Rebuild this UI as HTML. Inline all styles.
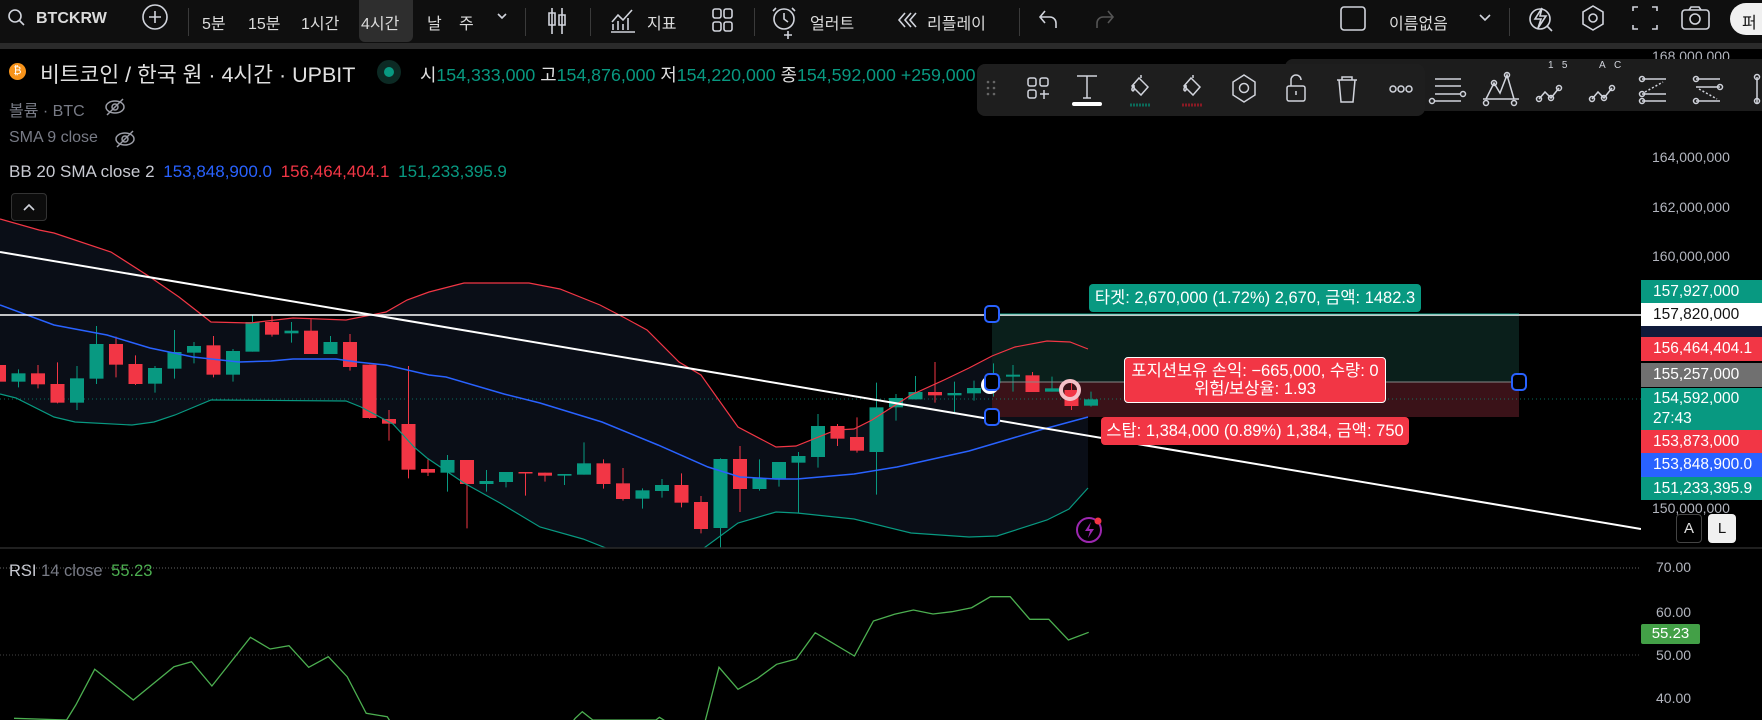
<!DOCTYPE html>
<html><head><meta charset="utf-8"><style>
*{margin:0;padding:0;box-sizing:border-box}
body{width:1762px;height:720px;background:#000;overflow:hidden;position:relative;font-family:"Liberation Sans","Noto Sans CJK KR",sans-serif;color:#d1d4dc}
.a{position:absolute;white-space:nowrap}
#top{position:absolute;left:0;top:0;width:1762px;height:43px;background:#0f0f0f}
#band{position:absolute;left:0;top:43px;width:1762px;height:6px;background:#2a2a2a}
.tb{font-size:16px;top:10px;color:#dbdbdb}
.div{position:absolute;top:8px;width:1px;height:28px;background:#3a3a3a}
.pl{position:absolute;left:1641px;width:121px;font-size:15.5px;color:#fff;padding-left:12px;line-height:23px}
.ax{position:absolute;left:1652px;font-size:14px;color:#b2b5be}
.g{color:#089981}
</style></head><body>
<svg id="ch" width="1762" height="720" style="position:absolute;left:0;top:0"></svg>

<div id="top"></div><div id="band"></div>
<svg class="a" style="left:0;top:0" width="1762" height="43" fill="none" stroke="#d1d4dc" stroke-width="1.6">
<circle cx="15" cy="16" r="6"/><path d="M19 20l5 5"/>
<circle cx="155" cy="17" r="12"/><path d="M155 11v12M149 17h12"/>
<path d="M498 14l4 4 4-4"/>
<path d="M552 8v26M552 13h-3v12h6V13z M562 8v26M559 15h6v10h-6z"/>
<path d="M611 32h24M613 30v-6M618 30v-9M623 30v-6M628 30v-12M612 22l6-7 5 5 9-10"/>
<rect x="713" y="9" width="8" height="9" rx="2"/><rect x="724" y="9" width="8" height="9" rx="2"/><rect x="713" y="22" width="8" height="9" rx="2"/><rect x="724" y="22" width="8" height="9" rx="2"/>
<circle cx="784" cy="19" r="10"/><path d="M784 13v6l4 3M776 8l-3 3M792 8l3 3M788 31v8M784 35h8"/>
<path d="M905 13l-6 7 6 7M911 13l-6 7 6 7M916 13l-6 7 6 7"/>
<path d="M1045 11l-5 6 5 6M1040 17h10a6 6 0 0 1 6 6v5"/>
<path d="M1108 11l5 6-5 6M1113 17h-10a6 6 0 0 0-6 6v5" stroke="#555"/>
<rect x="1341" y="7" width="24" height="23" rx="3"/>
<path d="M1480 15l5 5 5-5"/>
<path d="M1542 8l-7 11h6l-3 9 8-12h-6z"/><circle cx="1540" cy="19" r="10"/><path d="M1547 26l5 5"/>
<path d="M1593 6l10 6v12l-10 6-10-6V12z"/><circle cx="1593" cy="18" r="4"/>
<path d="M1633 11v-4h5M1652 7h5v4M1657 25v4h-5M1638 29h-5v-4"/>
<rect x="1682" y="10" width="27" height="19" rx="3"/><circle cx="1695" cy="19" r="5"/><path d="M1689 10l2-3h8l2 3"/>
</svg>
<div class="a" style="left:359px;top:0;width:54px;height:42px;background:#2e2e2e;border-radius:0 0 6px 6px"></div>
<div class="a tb" style="left:36px;font-weight:bold">BTCKRW</div>
<div class="div" style="left:188px"></div>
<div class="a tb" style="left:202px">5분</div>
<div class="a tb" style="left:248px">15분</div>
<div class="a tb" style="left:301px">1시간</div>
<div class="a tb" style="left:361px">4시간</div>
<div class="a tb" style="left:427px">날</div>
<div class="a tb" style="left:459px">주</div>
<div class="div" style="left:525px"></div>
<div class="div" style="left:590px"></div>
<div class="a tb" style="left:647px">지표</div>
<div class="div" style="left:754px"></div>
<div class="a tb" style="left:810px">얼러트</div>
<div class="a tb" style="left:927px">리플레이</div>
<div class="div" style="left:1019px"></div>
<div class="a tb" style="left:1389px">이름없음</div>
<div class="div" style="left:1509px"></div>
<div class="a" style="left:1730px;top:3px;width:50px;height:32px;background:#f0f0f0;border-radius:16px 0 0 16px;color:#111;font-size:16px;padding:6px 0 0 12px">퍼</div>

<!-- legend -->
<div class="a" style="left:9px;top:63px;width:17px;height:17px;border-radius:50%;background:#f7931a;color:#fff;font-size:11px;text-align:center;line-height:17px">₿</div>
<div class="a" style="left:40px;top:58px;font-size:21.5px;color:#e0e0e0">비트코인 / 한국 원 · 4시간 · UPBIT</div>
<div class="a" style="left:377px;top:60px;width:24px;height:24px;border-radius:50%;background:#0c2a24"></div>
<div class="a" style="left:384px;top:67px;width:10px;height:10px;border-radius:50%;background:#089981"></div>
<div class="a" style="left:420px;top:61px;font-size:17.8px;color:#e0e0e0">시<span class="g">154,333,000</span> 고<span class="g">154,876,000</span> 저<span class="g">154,220,000</span> 종<span class="g">154,592,000</span> <span class="g">+259,000</span></div>
<div class="a" style="left:9px;top:97px;font-size:16px;color:#787b86">볼륨 · BTC</div>
<div class="a" style="left:9px;top:129px;font-size:16px;color:#787b86">SMA 9 close</div>
<svg class="a" style="left:0;top:95px" width="140" height="60" fill="none" stroke="#9a9ca5" stroke-width="1.5"><ellipse cx="115" cy="12" rx="9" ry="6"/><circle cx="115" cy="12" r="3"/><path d="M107 20l16-16"/><ellipse cx="125" cy="44" rx="9" ry="6"/><circle cx="125" cy="44" r="3"/><path d="M117 52l16-16"/></svg>
<div class="a" style="left:9px;top:162px;font-size:17px;color:#c8cad2">BB 20 SMA close 2 <span style="color:#2962ff;margin-left:4px">153,848,900.0</span> <span style="color:#f23645;margin-left:4px">156,464,404.1</span> <span style="color:#089981;margin-left:4px">151,233,395.9</span></div>
<div class="a" style="left:11px;top:193px;width:36px;height:28px;border:1px solid #333;border-radius:4px;background:#0c0c0c"></div>
<svg class="a" style="left:11px;top:193px" width="36" height="28" fill="none" stroke="#d1d4dc" stroke-width="1.6"><path d="M13 17l5-5 5 5"/></svg>

<!-- axis labels -->
<div class="ax" style="top:48px">168,000,000</div>
<div class="ax" style="top:149px">164,000,000</div>
<div class="ax" style="top:199px">162,000,000</div>
<div class="ax" style="top:248px">160,000,000</div>
<div class="ax" style="top:500px">150,000,000</div>

<!-- drawing toolbars -->
<div class="a" style="left:1285px;top:59px;width:477px;height:52px;background:#1c1c1c;border-radius:8px 0 0 8px"></div>
<div class="a" style="left:977px;top:64px;width:448px;height:52px;background:#1e1e1e;border-radius:8px"></div>
<svg class="a" style="left:977px;top:59px" width="785" height="60" fill="none" stroke="#d1d4dc" stroke-width="1.5">
<g fill="#666" stroke="none"><circle cx="11" cy="23" r="1.3"/><circle cx="17" cy="23" r="1.3"/><circle cx="11" cy="29" r="1.3"/><circle cx="17" cy="29" r="1.3"/><circle cx="11" cy="35" r="1.3"/><circle cx="17" cy="35" r="1.3"/></g>
<rect x="51" y="19" width="8" height="8" rx="2"/><rect x="63" y="19" width="8" height="8" rx="2"/><rect x="51" y="31" width="8" height="8" rx="2"/><path d="M67 31v9M63 35h9"/>
<path d="M100 17h20M110 17v22M106 39h8"/><rect x="95" y="43" width="30" height="4" rx="2" fill="#fff" stroke="none"/>
<path d="M162 19l9 9-7 8-9-9z M157 26c-2 3-3 5-1 6 2-1 1-3 1-6M164 19v-3"/><path d="M153 46h20" stroke="#0b6b5a" stroke-width="3" stroke-dasharray="2 1"/>
<path d="M214 19l9 9-7 8-9-9z M209 26c-2 3-3 5-1 6 2-1 1-3 1-6M216 19v-3"/><path d="M205 46h20" stroke="#8a1a24" stroke-width="3" stroke-dasharray="2 1"/>
<path d="M267 16l11 7v13l-11 7-11-7V23z"/><circle cx="267" cy="29" r="4.5"/>
<rect x="310" y="27" width="18" height="15" rx="2"/><path d="M314 27v-6a5 5 0 0 1 10 0"/><path d="M319 32v4"/>
<path d="M360 21h20M365 21v-3h10v3M362 21l2 22h12l2-22"/>
<circle cx="416" cy="30" r="3"/><circle cx="424" cy="30" r="3"/><circle cx="432" cy="30" r="3"/>
<path d="M458 20h26M458 27h26M458 35h26M458 42h26"/><circle cx="486" cy="35" r="2.5"/><circle cx="455" cy="42" r="2.5"/>
<path d="M509 40l8-16 6 10 7-18 7 24M506 40h36"/><circle cx="517" cy="24" r="2.5"/><circle cx="530" cy="16" r="2.5"/><circle cx="509" cy="44" r="2.5"/><circle cx="537" cy="44" r="2.5"/>
<path d="M562 40l6-7 6 6 8-10"/><circle cx="562" cy="40" r="2.5"/><circle cx="574" cy="39" r="2.5"/><circle cx="582" cy="29" r="2.5"/>
<path d="M615 40l6-7 6 6 8-10"/><circle cx="615" cy="40" r="2.5"/><circle cx="627" cy="39" r="2.5"/><circle cx="635" cy="29" r="2.5"/>
<path d="M665 20h24M665 35h24M665 42h24"/><path d="M668 33l18-10" stroke-dasharray="2 2"/><circle cx="665" cy="20" r="2.5"/><circle cx="665" cy="35" r="2.5"/><circle cx="665" cy="42" r="2.5"/>
<path d="M719 20h24M719 28h24M719 42h24"/><path d="M722 30l18 10" stroke-dasharray="2 2"/><circle cx="719" cy="20" r="2.5"/><circle cx="743" cy="28" r="2.5"/><circle cx="719" cy="42" r="2.5"/>
<path d="M780 18v26"/><circle cx="780" cy="18" r="2.5"/><circle cx="780" cy="42" r="2.5"/>
</svg>
<div class="a" style="left:1548px;top:60px;font-size:10px;color:#d1d4dc">1&nbsp;&nbsp;&nbsp;5</div>
<div class="a" style="left:1599px;top:60px;font-size:10px;color:#d1d4dc">A&nbsp;&nbsp;&nbsp;C</div>

<!-- price labels -->
<div class="pl" style="top:280px;height:23px;background:#089981">157,927,000</div>
<div class="pl" style="top:303px;height:23px;background:#fff;color:#111">157,820,000</div>
<div class="a" style="left:1641px;top:326px;width:121px;height:11px;background:#101a3a"></div>
<div class="pl" style="top:337px;height:24px;background:#f23645">156,464,404.1</div>
<div class="pl" style="top:363px;height:24px;background:#707070">155,257,000</div>
<div class="pl" style="top:388px;height:42px;background:#089981;line-height:20px;padding-top:1px">154,592,000<br>27:43</div>
<div class="pl" style="top:430px;height:23px;background:#f23645">153,873,000</div>
<div class="pl" style="top:453px;height:24px;background:#2962ff">153,848,900.0</div>
<div class="pl" style="top:477px;height:23px;background:#089981">151,233,395.9</div>
<div class="a" style="left:1676px;top:514px;width:26px;height:29px;border:1px solid #444;border-radius:4px;font-size:15px;color:#e0e0e0;text-align:center;line-height:27px">A</div>
<div class="a" style="left:1708px;top:514px;width:28px;height:29px;background:#f0f0f0;border-radius:4px;font-size:15px;color:#111;text-align:center;line-height:29px">L</div>

<!-- position labels -->
<div class="a" style="left:1089px;top:284px;width:332px;height:28px;background:#089981;border-radius:4px;font-size:16.5px;color:#fff;text-align:center;line-height:28px">타겟: 2,670,000 (1.72%) 2,670, 금액: 1482.3</div>
<div class="a" style="left:1124px;top:357px;width:262px;height:46px;background:#f23645;border:1px solid #fff;border-radius:4px;font-size:16.5px;color:#fff;text-align:center;line-height:18px;padding-top:4px">포지션보유 손익: −665,000, 수량: 0<br>위험/보상율: 1.93</div>
<div class="a" style="left:1101px;top:417px;width:308px;height:28px;background:#f23645;border-radius:4px;font-size:16.5px;color:#fff;text-align:center;line-height:28px">스탑: 1,384,000 (0.89%) 1,384, 금액: 750</div>

<!-- RSI -->
<div class="a" style="left:9px;top:562px;font-size:16.5px;color:#c8cad2">RSI <span style="color:#787b86">14 close</span> <span style="color:#4caf50;margin-left:4px">55.23</span></div>
<div class="ax" style="left:1656px;top:559px">70.00</div>
<div class="ax" style="left:1656px;top:604px">60.00</div>
<div class="ax" style="left:1656px;top:647px">50.00</div>
<div class="ax" style="left:1656px;top:690px">40.00</div>
<div class="a" style="left:1641px;top:624px;width:59px;height:20px;background:#43a047;border-radius:2px;font-size:15px;color:#fff;text-align:center;line-height:20px">55.23</div>

<script>
var s=document.getElementById('ch'),h='';
function P(a){return a.map(function(p){return p[0]+','+p[1]}).join(' ')}
var up=[[0,219],[39,230],[54,233],[111,252],[150,277],[179,297],[211,322],[250,323],[293,318],[346,320],[386,312],[407,300],[429,292],[464,283],[529,283],[560,289],[600,305],[625,318],[647,330],[679,362],[701,375],[738,427],[776,447],[796,446],[836,430],[854,429],[872,420],[911,395],[944,380],[969,368],[992,356],[1015,347],[1047,341],[1070,342],[1088,349]];
var mid=[[0,305],[54,325],[75,329],[107,335],[150,348],[193,357],[239,362],[271,361],[293,359],[336,359],[357,362],[386,365],[429,375],[446,377],[504,394],[540,403],[602,422],[658,445],[708,467],[740,477],[776,479],[797,479],[854,474],[897,467],[969,451],[1040,430],[1088,417]];
var lo=[[0,394],[16,398],[54,417],[75,422],[132,425],[154,422],[175,415],[211,400],[346,401],[361,407],[393,424],[414,447],[427,458],[464,483],[500,503],[540,527],[583,539],[606,548],[640,560],[680,560],[704,548],[738,523],[776,512],[797,513],[854,519],[911,533],[969,537],[997,536],[1047,520],[1069,509],[1088,488]];
h+='<defs><clipPath id="cp"><rect x="0" y="49" width="1641" height="499"/></clipPath></defs><g clip-path="url(#cp)">';
h+='<polygon points="'+P(up.concat(lo.slice().reverse()))+'" fill="#0a0e17"/>';
h+='<rect x="992" y="314" width="527" height="68" fill="#0a1f1b"/><rect x="992" y="382" width="527" height="35" fill="#3a1218"/>';
h+='<line x1="0" y1="399" x2="1641" y2="399" stroke="#089981" stroke-width="1" stroke-dasharray="1 3" opacity=".7"/>';
var c4=[['r',405,455,400,460],['g',430,455,418,472],['r',430,463,405,475],['r',462,518,397,520],['g',445,518,408,540],['g',342,446,288,462],['r',342,404,320,442],['r',402,462,376,465],['g',414,461,408,488],['g',366,416,300,446],['g',348,368,336,400],['r',346,434,318,442],['g',363,434,357,455],['g',276,365,255,365],['r',276,314,258,320],['g',302,310,276,338],['r',302,372,268,372],['g',336,372,318,372],['r',336,411,312,422],['r',404,564,404,566],['r',567,581,540,632],['r',582,719,408,745],['r',717,728,688,738],['g',690,728,675,785],['r',690,762,690,895],['g',753,762,720,785],['g',726,756,726,772],['r',726,729,726,797]];
var c5=[['r',428,437,428,455],['g',432,437,432,465],['g',400,434,337,434],['r',400,462,388,476],['r',460,507,414,512],['g',481,506,475,536],['g',465,483,447,503],['r',465,518,430,532],['r',516,597,498,610],['g',387,594,385,655],['r',387,477,348,546],['g',444,477,388,482],['g',396,448,396,470],['g',378,398,366,548],['g',288,381,252,413],['r',288,326,282,348],['r',321,362,262,368],['g',232,366,158,494],['g',204,232,192,272],['g',186,208,138,208],['r',186,196,96,218],['g',189,196,155,246],['g',174,190,152,212],['g',145,160,100,200],['g',134,140,105,185],['r',136,186,126,186],['g',175,185,140,185],['r',180,228,160,240],['g',208,227,185,230]];
function cd(i,c,off){var x=-1+19.5*i,col=c[0]=='g'?'#089981':'#f23645',bt=c[1]/3+off,bb=c[2]/3+off,wt=c[3]/3+off,wb=c[4]/3+off;
h+='<line x1="'+x+'" y1="'+wt+'" x2="'+x+'" y2="'+wb+'" stroke="'+col+'" stroke-width="1"/><rect x="'+(x-7)+'" y="'+bt+'" width="14" height="'+Math.max(1.5,bb-bt)+'" fill="'+col+'"/>';}
c4.forEach(function(c,i){cd(i,c,230)});c5.forEach(function(c,i){cd(i+28,c,330)});
h+='<polyline points="'+P(up)+'" fill="none" stroke="#f23645" stroke-width="1.2"/>';
h+='<polyline points="'+P(mid)+'" fill="none" stroke="#2962ff" stroke-width="1.5"/>';
h+='<polyline points="'+P(lo)+'" fill="none" stroke="#089981" stroke-width="1.2"/>';
h+='<line x1="0" y1="315" x2="1641" y2="315" stroke="#fff" stroke-width="1.5"/>';
h+='<line x1="992" y1="314" x2="1519" y2="314" stroke="#089981" stroke-width="1"/><line x1="992" y1="382" x2="1519" y2="382" stroke="#888" stroke-width="1"/>';
h+='<line x1="0" y1="252" x2="1641" y2="529" stroke="#fff" stroke-width="2"/>';
h+='<circle cx="1070" cy="390" r="9" fill="none" stroke="#f5c0c8" stroke-width="4"/><circle cx="990" cy="385" r="9" fill="#fff"/>';
[[992,314],[992,382],[992,417],[1519,382]].forEach(function(p){h+='<rect x="'+(p[0]-7)+'" y="'+(p[1]-8)+'" width="14" height="16" rx="4" fill="#000" stroke="#2962ff" stroke-width="2"/>'});
h+='<circle cx="1089" cy="530" r="12" fill="none" stroke="#9c27b0" stroke-width="2"/><path d="M1091 522l-6 9h5l-2 7 6-9h-5z" fill="#9c27b0"/><circle cx="1098" cy="521" r="3.5" fill="#f23645"/>';
h+='</g>';
h+='<line x1="0" y1="548" x2="1762" y2="548" stroke="#2a2a2a" stroke-width="1.5"/>';
h+='<line x1="0" y1="568" x2="1641" y2="568" stroke="#666" stroke-dasharray="1 2"/><line x1="0" y1="655" x2="1641" y2="655" stroke="#444" stroke-dasharray="1 2"/>';
var r=[[20,505],[95,510],[108,465],[135,358],[190,450],[248,350],[273,335],[302,408],[357,262],[385,297],[412,287],[440,352],[468,320],[495,380],[522,490],[552,500],[570,560],[800,560],[820,505],[830,485],[845,510],[935,510],[940,502],[950,515],[1005,515],[1025,352],[1052,418],[1080,385],[1107,343],[1135,327],[1162,248],[1218,318],[1245,213],[1275,193],[1302,180],[1330,192],[1357,185],[1385,173],[1412,140],[1440,140],[1468,208],[1495,208],[1523,270],[1552,247]];
h+='<polyline points="'+P(r.map(function(p){return[(p[0]/1.4255).toFixed(1),(p[1]/3+550).toFixed(1)]}))+'" fill="none" stroke="#4caf50" stroke-width="1.3"/>';
s.innerHTML=h;
</script>
</body></html>
